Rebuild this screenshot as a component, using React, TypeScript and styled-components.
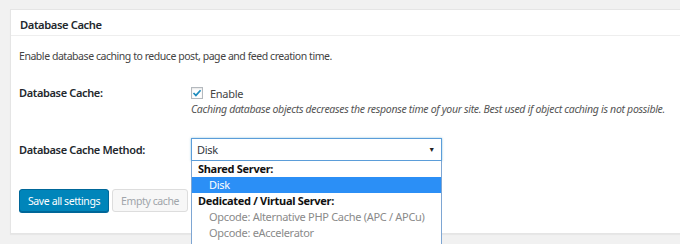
import styled, { createGlobalStyle } from 'styled-components';

const GlobalStyle = createGlobalStyle`
  html, body {
    margin: 0;
    padding: 0;
    background: #f1f1f1;
    overflow: hidden;
  }
  body {
    font-family: 'Noto Sans', 'Open Sans', sans-serif;
    font-size: 10.5px;
    letter-spacing: -0.45px;
    color: #23282d;
  }
`;

const Page = styled.div`
  width: 680px;
  height: 244px;
  padding: 9px 0 0 10px;
  box-sizing: border-box;
`;

const Postbox = styled.div`
  width: 700px;
  height: 225px;
  background: #fff;
  border: 1px solid #e5e5e5;
  box-shadow: 0 1px 1px rgba(0, 0, 0, 0.04);
  box-sizing: border-box;
`;

const Header = styled.h2`
  margin: 0;
  height: 26px;
  padding: 4px 9px 0;
  box-sizing: border-box;
  display: flex;
  align-items: center;
  border-bottom: 1px solid #eee;
  font-size: 11.2px;
  font-weight: 600;
  letter-spacing: -0.4px;
  color: #23282d;
`;

const Inside = styled.div`
  padding: 11px 8px 0;
`;

const Intro = styled.p`
  margin: 0 0 20px;
  line-height: 18px;
  color: #444;
`;

const FormRow = styled.div<{ $gap: number }>`
  display: grid;
  grid-template-columns: 172px 1fr;
  align-items: start;
  margin-bottom: ${(p) => p.$gap}px;
`;

const Label = styled.div<{ $top: number }>`
  font-size: 11px;
  font-weight: 600;
  letter-spacing: -0.35px;
  color: #23282d;
  padding-top: ${(p) => p.$top}px;
`;

const CheckLine = styled.label`
  display: flex;
  align-items: center;
  gap: 7px;
  height: 16px;
  font-size: 11px;
  letter-spacing: -0.3px;
  color: #444;
`;

const Checkbox = styled.span`
  width: 10px;
  height: 10px;
  border: 1px solid #b4b9be;
  background: #fff;
  box-shadow: inset 0 1px 2px rgba(0, 0, 0, 0.1);
  display: flex;
  align-items: center;
  justify-content: center;
`;

const Hint = styled.p`
  margin: 0;
  line-height: 17px;
  font-style: italic;
  font-size: 10.5px;
  letter-spacing: -0.3px;
  white-space: nowrap;
  color: #555;
`;

const SelectWrap = styled.div`
  position: relative;
  width: 251px;
  font-size: 11px;
  letter-spacing: -0.3px;
`;

const SelectBox = styled.div`
  height: 23px;
  box-sizing: border-box;
  border: 1px solid #5b9dd9;
  box-shadow: 0 0 2px rgba(30, 140, 190, 0.5);
  padding: 0 6px 0 5px;
  display: flex;
  align-items: center;
  justify-content: space-between;
  color: #32373c;
  background: #fff;
`;

const Arrow = styled.span`
  font-size: 7px;
  color: #222;
`;

const OptionList = styled.div`
  position: absolute;
  top: 23px;
  left: 0;
  width: 251px;
  box-sizing: border-box;
  background: #fff;
  border: 1px solid #7ea6d3;
  border-top: none;
  z-index: 5;
`;

const Option = styled.div<{ $kind: 'group' | 'selected' | 'disabled' }>`
  height: 16px;
  line-height: 16px;
  white-space: nowrap;
  padding-left: ${(p) => (p.$kind === 'group' ? 6 : 17)}px;
  font-weight: ${(p) => (p.$kind === 'group' ? 700 : 400)};
  color: ${(p) =>
    p.$kind === 'group' ? '#111' : p.$kind === 'selected' ? '#fff' : '#8a8a8a'};
  background: ${(p) => (p.$kind === 'selected' ? '#2b8ff6' : 'transparent')};
`;

const Buttons = styled.div`
  display: flex;
  gap: 3px;
  margin-top: 28px;
`;

const Button = styled.button<{ $primary?: boolean }>`
  height: 23px;
  padding: 0 8px;
  border-radius: 3px;
  font-family: inherit;
  font-size: 10.5px;
  letter-spacing: -0.4px;
  border: 1px solid ${(p) => (p.$primary ? '#006799' : '#ddd')};
  background: ${(p) => (p.$primary ? '#0085ba' : '#f7f7f7')};
  color: ${(p) => (p.$primary ? '#fff' : '#a0a5aa')};
  box-shadow: ${(p) => (p.$primary ? '0 1px 0 #006799' : 'none')};
`;

const options: { text: string; kind: 'group' | 'selected' | 'disabled' }[] = [
  { text: 'Shared Server:', kind: 'group' },
  { text: 'Disk', kind: 'selected' },
  { text: 'Dedicated / Virtual Server:', kind: 'group' },
  { text: 'Opcode: Alternative PHP Cache (APC / APCu)', kind: 'disabled' },
  { text: 'Opcode: eAccelerator', kind: 'disabled' },
  { text: 'Opcode: XCache', kind: 'disabled' },
];

export default function App() {
  return (
    <Page>
      <GlobalStyle />
      <Postbox>
        <Header>Database Cache</Header>
        <Inside>
          <Intro>Enable database caching to reduce post, page and feed creation time.</Intro>

          <FormRow $gap={20}>
            <Label $top={0}>Database Cache:</Label>
            <div>
              <CheckLine>
                <Checkbox>
                  <svg width="10" height="10" viewBox="0 0 10 10">
                    <path d="M1.5 5 L3.9 7.4 L8.6 2.2" fill="none" stroke="#1e8cbe" strokeWidth="1.7" />
                  </svg>
                </Checkbox>
                Enable
              </CheckLine>
              <Hint>
                Caching database objects decreases the response time of your site. Best used if
                object caching is not possible.
              </Hint>
            </div>
          </FormRow>

          <FormRow $gap={0}>
            <Label $top={4}>Database Cache Method:</Label>
            <SelectWrap>
              <SelectBox>
                Disk
                <Arrow>▼</Arrow>
              </SelectBox>
              <OptionList>
                {options.map((o) => (
                  <Option key={o.text} $kind={o.kind}>
                    {o.text}
                  </Option>
                ))}
              </OptionList>
            </SelectWrap>
          </FormRow>

          <Buttons>
            <Button $primary>Save all settings</Button>
            <Button disabled>Empty cache</Button>
          </Buttons>
        </Inside>
      </Postbox>
    </Page>
  );
}
